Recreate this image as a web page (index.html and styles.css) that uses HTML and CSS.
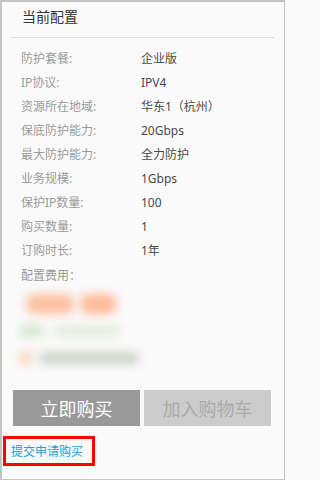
FILE: index.html
```html
<!DOCTYPE html>
<html lang="zh-CN">
<head>
<meta charset="utf-8">
<title>当前配置</title>
<link rel="stylesheet" href="styles.css">
</head>
<body>
<div class="panel">
  <div class="title">当前配置</div>
  <div class="divider"></div>
  <div class="rows">
    <div class="row"><span class="label">防护套餐:</span><span class="value">企业版</span></div>
    <div class="row"><span class="label">IP协议:</span><span class="value">IPV4</span></div>
    <div class="row"><span class="label">资源所在地域:</span><span class="value">华东1（杭州）</span></div>
    <div class="row"><span class="label">保底防护能力:</span><span class="value">20Gbps</span></div>
    <div class="row"><span class="label">最大防护能力:</span><span class="value">全力防护</span></div>
    <div class="row"><span class="label">业务规模:</span><span class="value">1Gbps</span></div>
    <div class="row"><span class="label">保护IP数量:</span><span class="value">100</span></div>
    <div class="row"><span class="label">购买数量:</span><span class="value">1</span></div>
    <div class="row"><span class="label">订购时长:</span><span class="value">1年</span></div>
    <div class="row fee"><span class="label">配置费用：</span></div>
  </div>
  <div class="blurred">
    <div class="blur-line price"><span class="blob o1"></span><span class="blob o2"></span></div>
    <div class="blur-line green"><span class="blob g1"></span><span class="blob g2"></span></div>
    <div class="blur-line note"><span class="blob o3"></span><span class="blob gr"></span></div>
  </div>
  <div class="buttons">
    <button class="btn buy">立即购买</button>
    <button class="btn cart">加入购物车</button>
  </div>
  <div class="apply"><a class="apply-link">提交申请购买</a></div>
</div>
</body>
</html>
```

FILE: styles.css
```css
html, body {
  margin: 0;
  padding: 0;
  background: #fafafa;
}
body {
  font-family: "Noto Sans", "Noto Sans CJK SC", "Liberation Sans", sans-serif;
}
.panel {
  width: 285px;
  height: 480px;
  box-sizing: border-box;
  border: 1px solid #c4c4c4;
  border-left-width: 2px;
  border-top-width: 2px;
  background: #fafafa;
  display: flex;
  flex-direction: column;
}
.title {
  height: 35px;
  line-height: 30px;
  padding-left: 20px;
  font-size: 14px;
  color: #333;
}
.divider {
  margin: 0 10px 0 9px;
  border-top: 1px solid #dcdcdc;
}
.rows {
  padding-top: 9px;
  padding-left: 19px;
  display: flex;
  flex-direction: column;
}
.row {
  display: flex;
  height: 24px;
  line-height: 24px;
  font-size: 12px;
}
.row.fee {
  margin-top: 1px;
}
.label {
  width: 120px;
  color: #9a9a9a;
}
.value {
  color: #4a4a4a;
}
.blurred {
  height: 102px;
  padding-top: 6px;
  box-sizing: border-box;
  display: flex;
  flex-direction: column;
  gap: 9px;
}
.blur-line {
  display: flex;
  align-items: center;
  height: 20px;
}
.blob {
  display: block;
  filter: blur(5px);
  border-radius: 8px;
}
.o1 {
  margin-left: 24px;
  width: 48px;
  height: 20px;
  background: #ffc2a3;
}
.o2 {
  margin-left: 6px;
  width: 36px;
  height: 20px;
  background: #ffbb99;
}
.green {
  height: 16px;
}
.g1 {
  margin-left: 18px;
  width: 24px;
  height: 12px;
  background: #d5e6cf;
}
.g2 {
  margin-left: 10px;
  width: 66px;
  height: 10px;
  background: #e0ebdc;
}
.o3 {
  margin-left: 17px;
  width: 14px;
  height: 14px;
  background: #fad6c3;
}
.gr {
  margin-left: 6px;
  width: 100px;
  height: 12px;
  background: #ccd3c8;
}
.buttons {
  display: flex;
  gap: 4px;
  padding-left: 11px;
}
.btn {
  width: 127px;
  height: 36px;
  border: 0;
  padding: 0;
  margin: 0;
  font-family: "Noto Sans CJK SC", sans-serif;
  font-size: 18px;
  line-height: 36px;
}
.buy {
  background: #999;
  color: #fff;
}
.cart {
  background: #ccc;
  color: #aaa;
}
.apply {
  margin-top: 10px;
  margin-left: 1px;
  width: 92px;
  height: 30px;
  box-sizing: border-box;
  border: 3px solid #f00;
  display: flex;
  align-items: center;
  padding-left: 5px;
}
.apply-link {
  font-family: "Noto Sans CJK SC", sans-serif;
  font-size: 12px;
  color: #1e9ccc;
  line-height: 16px;
}
```
